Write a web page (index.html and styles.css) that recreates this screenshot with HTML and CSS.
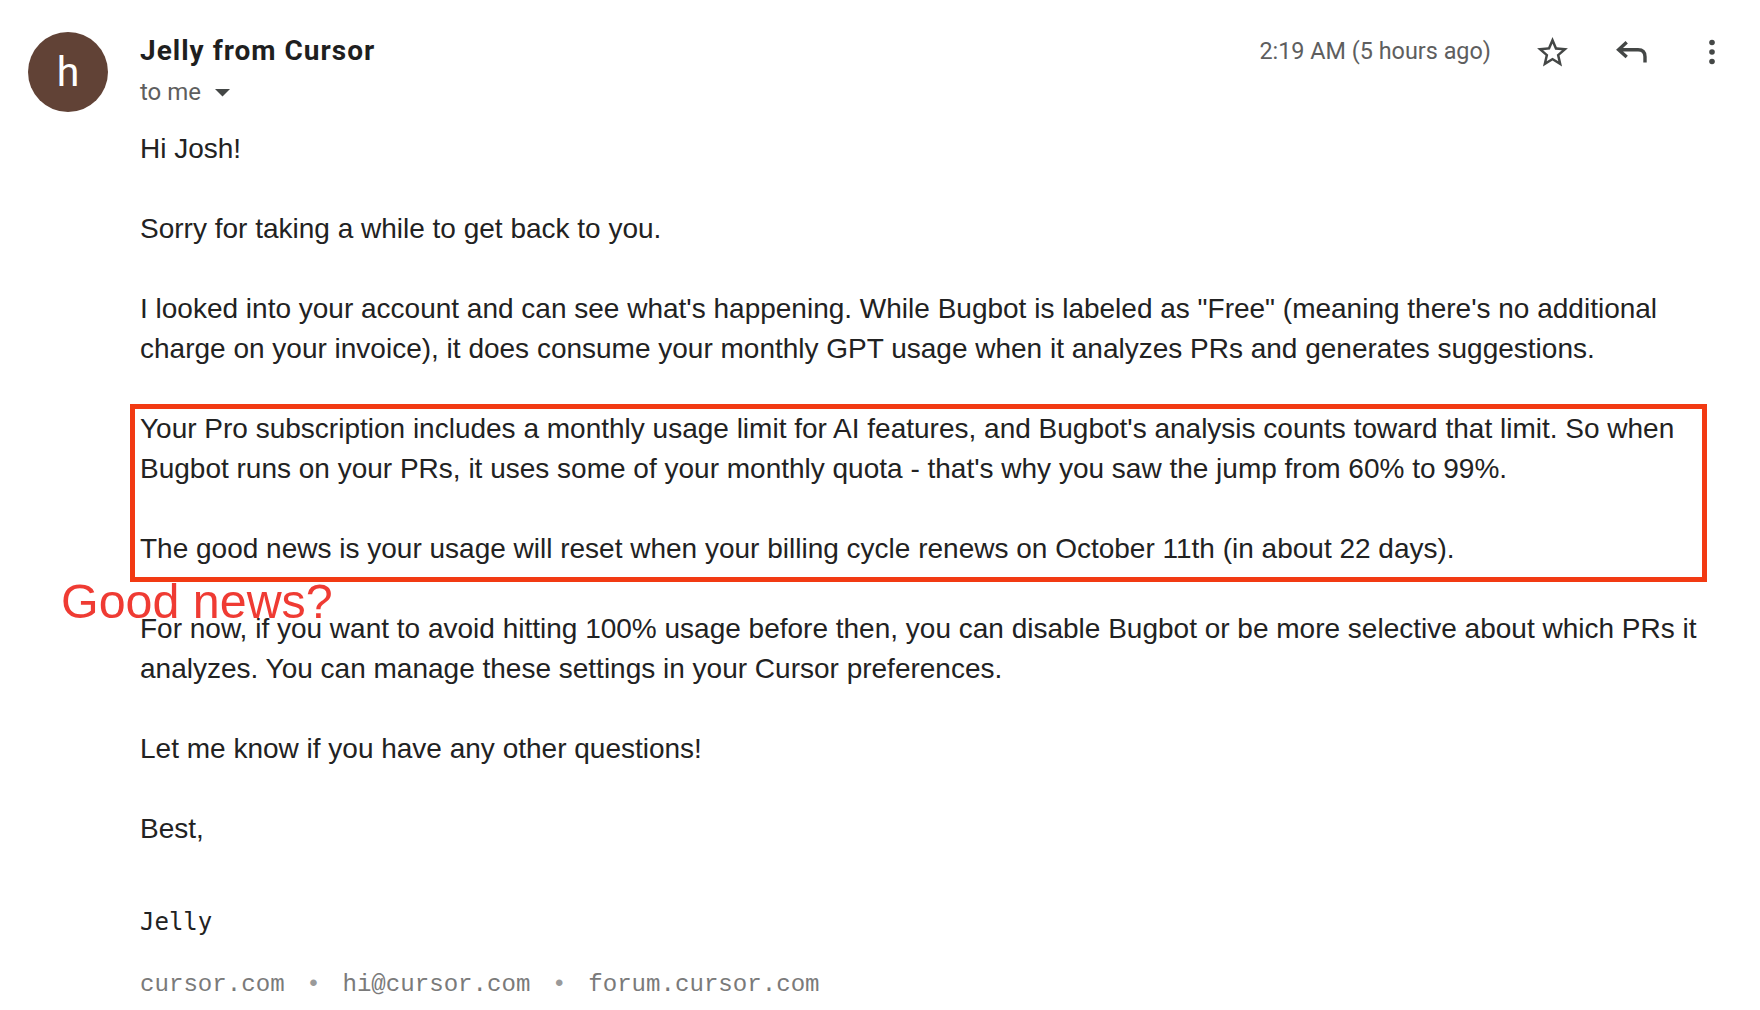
FILE: index.html
```html
<!DOCTYPE html>
<html lang="en">
<head>
<meta charset="utf-8">
<title>Jelly from Cursor</title>
<link rel="stylesheet" href="styles.css">
</head>
<body>
<div class="msg">
  <div class="avatar">h</div>
  <div class="main">
    <div class="head">
      <div class="from">
        <div class="name">Jelly from Cursor</div>
        <div class="to">to me <svg class="caret" width="15" height="8" viewBox="0 0 15 8"><path d="M0 0h15L7.5 7.5z" fill="#444746"/></svg></div>
      </div>
      <div class="meta">
        <span class="time">2:19 AM (5 hours ago)</span>
        <span class="icon-btn">
          <svg width="37" height="37" viewBox="0 0 24 24"><path fill="#444746" d="M22 9.24l-7.19-.62L12 2 9.19 8.63 2 9.24l5.46 4.73L5.82 21 12 17.27 18.18 21l-1.63-7.03L22 9.24zM12 15.4l-3.760 2.27 1-4.28-3.32-2.88 4.38-.38L12 6.1l1.71 4.04 4.38.38-3.32 2.88 1 4.28L12 15.4z"/></svg>
        </span>
        <span class="icon-btn">
          <svg width="32" height="24" viewBox="0 0 32 24"><path d="M10.7 2.3L2.6 9.7l8.1 7.4M2.6 9.7H22Q29 9.7 29 16.7V22.6" fill="none" stroke="#444746" stroke-width="3.4"/></svg>
        </span>
        <span class="icon-btn">
          <svg width="40" height="40" viewBox="0 0 40 40"><circle cx="20" cy="10.5" r="2.8" fill="#444746"/><circle cx="20" cy="20" r="2.8" fill="#444746"/><circle cx="20" cy="29.5" r="2.8" fill="#444746"/></svg>
        </span>
      </div>
    </div>
    <div class="body">
      <p>Hi Josh!</p>
      <p>Sorry for taking a while to get back to you.</p>
      <p>I looked into your account and can see what's happening. While Bugbot is labeled as "Free" (meaning there's no additional charge on your invoice), it does consume your monthly GPT usage when it analyzes PRs and generates suggestions.</p>
      <div class="highlight">
        <p>Your Pro subscription includes a monthly usage limit for AI features, and Bugbot's analysis counts toward that limit. So when Bugbot runs on your PRs, it uses some of your monthly quota - that's why you saw the jump from 60% to 99%.</p>
        <p>The good news is your usage will reset when your billing cycle renews on October 11th (in about 22 days).</p>
        <span class="note">Good news?</span>
      </div>
      <p>For now, if you want to avoid hitting 100% usage before then, you can disable Bugbot or be more selective about which PRs it analyzes. You can manage these settings in your Cursor preferences.</p>
      <p>Let me know if you have any other questions!</p>
      <p class="last">Best,</p>
    </div>
    <div class="sig">
      <div class="sig-name">Jelly</div>
      <div class="sig-links"><span>cursor.com</span><span class="sep">•</span><span>hi@cursor.com</span><span class="sep">•</span><span>forum.cursor.com</span></div>
    </div>
  </div>
</div>
</body>
</html>
```
FILE: styles.css
```css
html, body {
  margin: 0;
  padding: 0;
  background: #ffffff;
}

.msg {
  display: flex;
  align-items: flex-start;
  gap: 32px;
  padding: 32px 8px 0 28px;
}

.avatar {
  flex: none;
  width: 80px;
  height: 80px;
  border-radius: 50%;
  background: #614236;
  color: #ffffff;
  font-family: Roboto, "Liberation Sans", sans-serif;
  font-size: 41px;
  display: flex;
  align-items: center;
  justify-content: center;
}

.main {
  flex: 1;
  min-width: 0;
}

.head {
  display: flex;
  justify-content: space-between;
  align-items: flex-start;
}

.from {
  padding-top: 2px;
  font-family: Roboto, "Liberation Sans", sans-serif;
}

.name {
  font-size: 28px;
  font-weight: 700;
  line-height: 33px;
  color: #1f1f1f;
  letter-spacing: 1px;
}

.to {
  margin-top: 10px;
  font-size: 24px;
  line-height: 30px;
  color: #5e5e5e;
  display: flex;
  align-items: center;
  gap: 14px;
}

.caret {
  display: block;
  margin-top: 2px;
}

.meta {
  display: flex;
  align-items: center;
  height: 44px;
  margin-top: -2px;
}

.time {
  font-family: Roboto, "Liberation Sans", sans-serif;
  font-size: 23.4px;
  color: #5e5e5e;
  margin-right: 21px;
  position: relative;
  top: -1px;
}

.icon-btn {
  width: 80px;
  height: 44px;
  display: flex;
  align-items: center;
  justify-content: center;
}

.icon-btn svg {
  display: block;
}

.body {
  margin-top: 22px;
  padding-right: 32px;
  font-family: "Liberation Sans", Arial, sans-serif;
  font-size: 28px;
  line-height: 40px;
  color: #222222;
}

.body p {
  margin: 0 0 40px;
}

.body p.last {
  margin-bottom: 0;
}

.highlight {
  position: relative;
  margin-bottom: 40px;
}

.highlight p:last-of-type {
  margin-bottom: 0;
}

.highlight::before {
  content: "";
  position: absolute;
  top: -5px;
  left: -10px;
  right: 13px;
  bottom: -13px;
  border: 5px solid #f23a13;
  pointer-events: none;
}

.note {
  position: absolute;
  left: -79px;
  top: 168px;
  font-family: "Liberation Sans", Arial, sans-serif;
  font-size: 48.4px;
  line-height: 48px;
  color: #ef3b33;
  white-space: nowrap;
}

.sig {
  margin-top: 58px;
}

.sig-name {
  font-family: "DejaVu Sans Mono", monospace;
  font-size: 24px;
  line-height: 30px;
  color: #222222;
}

.sig-links {
  margin-top: 33px;
  font-family: "Liberation Mono", "Courier New", monospace;
  font-size: 24.1px;
  line-height: 30px;
  color: #7a7a7a;
  white-space: nowrap;
}

.sep {
  display: inline-block;
  width: 57.84px;
  text-align: center;
  color: #9a9a9a;
}
```
